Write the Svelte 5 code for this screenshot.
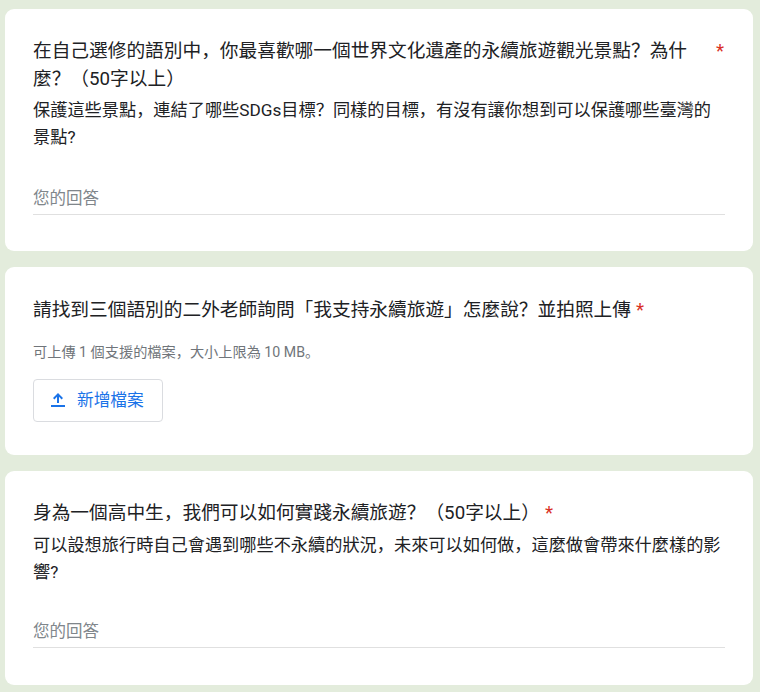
<script>
	const questions = [
		{
			title: "在自己選修的語別中，你最喜歡哪一個世界文化遺產的永續旅遊觀光景點？為什麼？（50字以上）",
			desc: "保護這些景點，連結了哪些SDGs目標？同樣的目標，有沒有讓你想到可以保護哪些臺灣的景點?",
			kind: "text"
		},
		{
			title: "請找到三個語別的二外老師詢問「我支持永續旅遊」怎麼說？並拍照上傳",
			kind: "file"
		},
		{
			title: "身為一個高中生，我們可以如何實踐永續旅遊？（50字以上）",
			desc: "可以設想旅行時自己會遇到哪些不永續的狀況，未來可以如何做，這麼做會帶來什麼樣的影響?",
			kind: "text"
		}
	];
</script>

<main class="page">
	{#each questions as q}
		<section class="card {q.kind}">
			<div class="heading">
				<span class="title">{q.title}</span>
				<span class="req">*</span>
			</div>
			{#if q.desc}
				<p class="desc">{q.desc}</p>
			{/if}
			{#if q.kind === "text"}
				<div class="answer">您的回答</div>
			{:else}
				<p class="hint">可上傳 1 個支援的檔案，大小上限為 10 MB。</p>
				<button class="add" type="button">
					<svg width="24" height="24" viewBox="0 0 24 24" fill="#1a73e8">
						<path d="M5 17h14v2H5zM11 15h2V8.8l2.6 2.6L17 10l-5-5-5 5 1.4 1.4L11 8.8z" />
					</svg>
					<span>新增檔案</span>
				</button>
			{/if}
		</section>
	{/each}
</main>

<style>
	:global(body) {
		background: #e3ecdc;
	}

	.page {
		display: flex;
		flex-direction: column;
		gap: 16px;
		height: 692px;
		box-sizing: border-box;
		padding: 9px 7px 0 5px;
		overflow: hidden;
		font-family: "Roboto", "Noto Sans CJK SC", sans-serif;
		color: #202124;
	}

	.card {
		background: #fff;
		border-radius: 9px;
		padding: 28px 28px 0;
		box-sizing: border-box;
		flex: none;
	}

	.card:nth-child(1) {
		height: 242px;
	}

	.card:nth-child(2) {
		height: 188px;
		padding-top: 29px;
	}

	.card:nth-child(3) {
		height: 214px;
	}

	.card:nth-child(3) .desc {
		margin-top: 5px;
	}

	.card:nth-child(3) .answer {
		margin-top: 34px;
	}

	.heading {
		display: flex;
		font-size: 18.7px;
		line-height: 28px;
	}

	.req {
		color: #d93025;
		margin-left: 5px;
		flex: none;
	}

	.card:nth-child(1) .title {
		flex: 0 0 665px;
	}

	.card:nth-child(1) .req {
		margin-left: auto;
		margin-right: 1px;
	}

	.desc {
		margin: 4px 0 0;
		font-size: 17.2px;
		line-height: 27px;
		max-width: 692px;
	}

	.answer {
		margin-top: 36px;
		font-size: 16.5px;
		line-height: 24px;
		color: #80868b;
		padding-bottom: 3px;
		border-bottom: 1px solid #e0e0e0;
	}

	.hint {
		margin: 19px 0 0;
		font-size: 14.2px;
		line-height: 18px;
		color: #70757a;
	}

	.add {
		display: flex;
		align-items: center;
		gap: 7px;
		margin-top: 18px;
		width: 130px;
		height: 43px;
		padding: 0 0 2px 12px;
		background: #fff;
		border: 1px solid #dadce0;
		border-radius: 4px;
		font: inherit;
		font-size: 16.7px;
		color: #1a73e8;
	}

	.add span {
		padding-bottom: 2px;
	}

	.add svg {
		flex: none;
	}
</style>
